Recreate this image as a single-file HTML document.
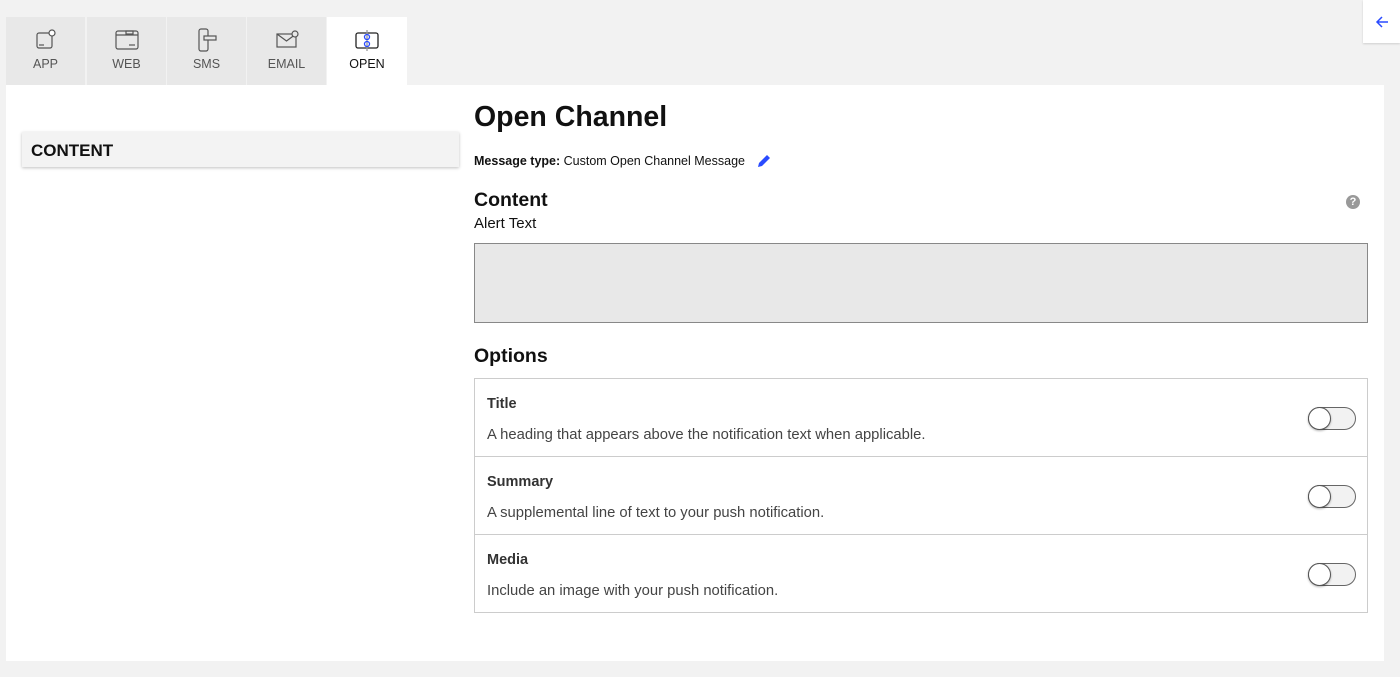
<!DOCTYPE html>
<html><head><style>
body{margin:0;width:1400px;height:677px;background:#f2f2f2;font-family:"Liberation Sans",sans-serif;position:relative;overflow:hidden;color:#111}
.tab{position:absolute;top:17px;width:79px;height:68px;background:#e8e8e8;text-align:center;font-size:12.5px;color:#555}
.tab svg{display:block;margin:11px auto 5px}
.panel{position:absolute;left:6px;top:85px;width:1378px;height:576px;background:#fff}
.abs{position:absolute}
.row{position:absolute;left:0;width:894px;height:78px;border-top:1px solid #ccc}
.row b{position:absolute;left:12px;top:17px;font-size:14.5px;color:#333}
.row span{position:absolute;left:12px;top:48px;font-size:14.8px;color:#444}
.tg{position:absolute;left:833px;top:28px;width:46px;height:21px;border:1px solid #666;border-radius:12px;background:#f2f2f2}
.tg:before{content:"";position:absolute;left:-1px;top:-1px;width:21px;height:21px;border:1px solid #555;border-radius:50%;background:#fff;box-shadow:0 1px 2px rgba(0,0,0,.3)}
</style></head><body>
<div class="tab" style="left:6px"><svg width="22" height="24" viewBox="0 0 22 24" fill="none" stroke="#555" stroke-width="1.2"><rect x="2" y="5" width="15" height="15" rx="2"/><circle cx="17" cy="5" r="3" fill="#fff"/><line x1="4" y1="17" x2="9" y2="17"/></svg>APP</div>
<div class="tab" style="left:87px"><svg width="26" height="24" viewBox="0 0 26 24" fill="none" stroke="#555" stroke-width="1.2"><rect x="2" y="3" width="22" height="18" rx="2"/><line x1="2" y1="7" x2="24" y2="7"/><rect x="12" y="3" width="7" height="3"/><line x1="15" y1="17" x2="21" y2="17"/></svg>WEB</div>
<div class="tab" style="left:167px"><svg width="22" height="24" viewBox="0 0 22 24" fill="none" stroke="#555" stroke-width="1.2"><rect x="3" y="1" width="9" height="22" rx="2"/><rect x="8" y="8" width="12" height="4" fill="#e8e8e8"/></svg>SMS</div>
<div class="tab" style="left:247px"><svg width="24" height="24" viewBox="0 0 24 24" fill="none" stroke="#555" stroke-width="1.2"><rect x="2" y="6" width="19" height="13"/><path d="M2 6l9.5 7 9.5-7"/><circle cx="20" cy="6" r="3" fill="#e8e8e8"/></svg>EMAIL</div>
<div class="tab" style="left:327px;width:80px;background:#fff;color:#111"><svg width="26" height="24" viewBox="0 0 26 24" fill="none" stroke="#222" stroke-width="1.3"><rect x="2" y="5" width="22" height="15" rx="2"/><line x1="13" y1="2" x2="13" y2="23" stroke="#999"/><circle cx="13" cy="9" r="2.5" stroke="#2a4bff"/><circle cx="13" cy="16" r="2.5" stroke="#2a4bff"/></svg>OPEN</div>
<div class="abs" style="left:1363px;top:0;width:37px;height:43px;background:#fff;box-shadow:0 1px 2px rgba(0,0,0,.15)"><svg class="abs" style="left:12px;top:15px" width="14" height="14" viewBox="0 0 14 14" fill="none" stroke="#2a4bff" stroke-width="1.5"><path d="M13 7H2M7 2L2 7l5 5"/></svg></div>
<div class="panel">
<div class="abs" style="left:16px;top:47px;width:437px;height:35px;background:#f3f3f3;box-shadow:0 1px 3px rgba(0,0,0,.25)"><div style="padding:9px 9px;font-weight:bold;font-size:17px">CONTENT</div></div>
<div class="abs" style="left:468px;top:16px;font-size:28.5px;font-weight:bold">Open Channel</div>
<div class="abs" style="left:468px;top:69px;font-size:12.5px"><b>Message type:</b> Custom Open Channel Message</div>
<svg class="abs" style="left:750px;top:68px" width="16" height="16" viewBox="0 0 16 16"><path d="M2 14l1-4 8-8 3 3-8 8z" fill="#2a4bff"/></svg>
<div class="abs" style="left:468px;top:104px;font-size:19.5px;font-weight:bold">Content</div>
<div class="abs" style="left:468px;top:130px;font-size:15px">Alert Text</div>
<div class="abs" style="left:1340px;top:110px;width:14px;height:14px;border-radius:50%;background:#999;color:#fff;font-size:11px;font-weight:bold;text-align:center;line-height:14px">?</div>
<div class="abs" style="left:468px;top:158px;width:892px;height:78px;background:#e8e8e8;border:1px solid #888"></div>
<div class="abs" style="left:468px;top:260px;font-size:19.5px;font-weight:bold">Options</div>
<div class="abs" style="left:468px;top:293px;width:892px;height:234px;border:1px solid #ccc;border-top:none">
<div class="row" style="top:0;left:0;width:892px"><b>Title</b><span>A heading that appears above the notification text when applicable.</span><div class="tg"></div></div>
<div class="row" style="top:78px;left:0;width:892px"><b>Summary</b><span>A supplemental line of text to your push notification.</span><div class="tg"></div></div>
<div class="row" style="top:156px;left:0;width:892px"><b>Media</b><span>Include an image with your push notification.</span><div class="tg"></div></div>
</div>
</div>
</body></html>
